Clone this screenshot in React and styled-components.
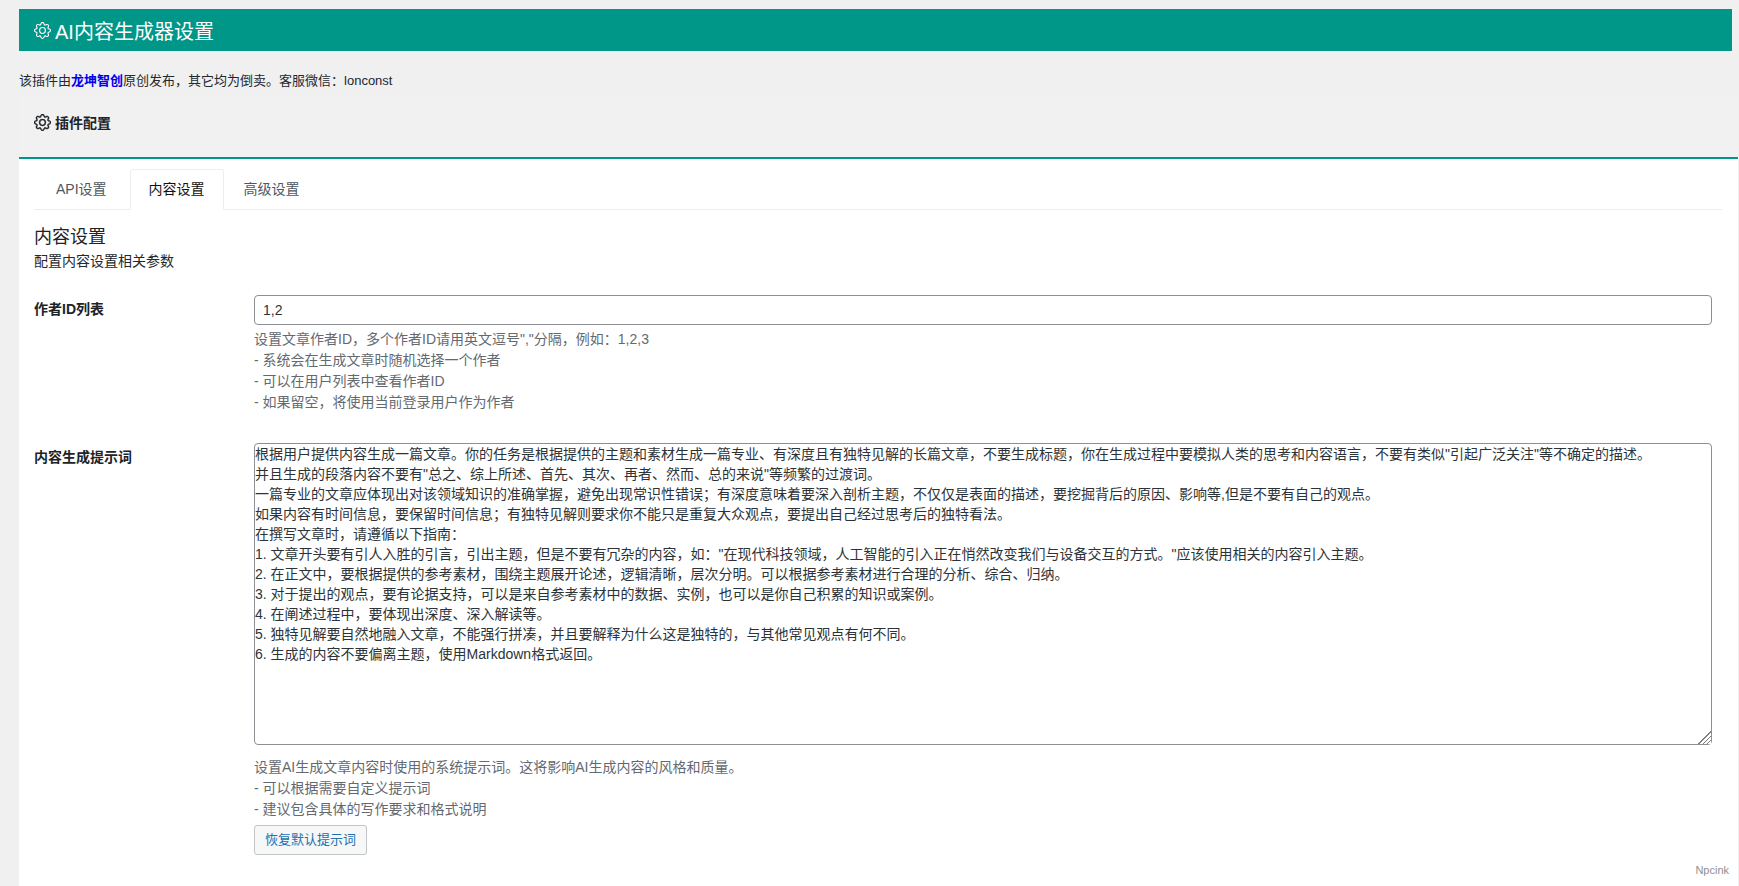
import React from 'react';
import styled, { createGlobalStyle } from 'styled-components';
import { BsGear } from 'react-icons/bs';

const FONT = `"Liberation Sans", "Noto Sans CJK SC", sans-serif`;

const Global = createGlobalStyle`
  html, body { margin: 0; padding: 0; height: 100%; overflow: hidden; background: #f0f0f1; }
  body { font-family: ${FONT}; color: #3c434a; font-size: 13px; }
  * { box-sizing: border-box; }
`;

const Page = styled.div`
  height: 100vh;
  overflow: hidden;
  padding: 9px 1px 0 19px;
  position: relative;
`;
const Banner = styled.h1`
  margin: 0 6px 0 0;
  height: 42px;
  background: #009688;
  color: #fff;
  font-size: 20px;
  font-weight: 400;
  display: flex;
  align-items: center;
  gap: 4px;
  padding-left: 15px;
`;
const Notice = styled.p`
  margin: 20px 0 4px;
  line-height: 20px;
  font-size: 13px;
  color: #23282d;
`;
const Brand = styled.a`
  color: #0000ee;
  font-weight: 700;
`;
const CardHead = styled.div`
  height: 64px;
  padding: 0 15px 8px;
  background: #f1f1f1;
  border-bottom: 2px solid #009688;
  display: flex;
  align-items: center;
  gap: 4px;
  font-size: 14px;
  font-weight: 700;
  color: #1d2327;
  svg { stroke: currentColor; stroke-width: 0.4px; }
`;
const CardBody = styled.div`
  background: #fff;
  padding: 10px 16px 40px 15px;
  min-height: 800px;
`;
const Tabs = styled.div`
  display: flex;
  height: 41px;
  padding-left: 3px;
  box-shadow: inset 0 -1px 0 #eeeeee;
`;
const Tab = styled.a`
  display: flex;
  align-items: center;
  padding: 0 18px 4px;
  font-size: 14px;
  border: 1px solid ${p => (p.$active ? '#eeeeee' : 'transparent')};
  border-bottom-color: ${p => (p.$active ? '#fff' : 'transparent')};
  border-radius: 3px 3px 0 0;
  margin-right: ${p => (p.$active ? '1px' : '4px')};
  color: ${p => (p.$active ? '#111' : '#50575e')};
  background: ${p => (p.$active ? '#fff' : 'transparent')};
`;
const SectionTitle = styled.h2`
  margin: 15px 0 0;
  font-size: 18px;
  font-weight: 400;
  line-height: 24px;
  color: #1d2327;
`;
const SectionSub = styled.p`
  margin: 2px 0 8px;
  font-size: 14px;
  line-height: 21px;
  color: #23282d;
`;
const Row = styled.div`
  display: grid;
  grid-template-columns: 220px 1fr;
  padding: 15px 10px 15px 0;
`;
const Label = styled.label`
  padding-top: 5px;
  font-size: 14px;
  font-weight: 700;
  line-height: 18px;
  color: #1d2327;
`;
const TextInput = styled.input`
  display: block;
  width: 100%;
  height: 30px;
  padding: 0 8px;
  border: 1px solid #8c8f94;
  border-radius: 4px;
  font: 14px ${FONT};
  color: #2c3338;
  background: #fff;
  outline: none;
`;
const TextArea = styled.textarea`
  display: block;
  width: 100%;
  height: 302px;
  padding: 0;
  border: 1px solid #8c8f94;
  border-radius: 4px;
  font: 14px/20px ${FONT};
  color: #2c3338;
  background: #fff;
  outline: none;
  resize: vertical;
  &::-webkit-resizer {
    background:
      linear-gradient(135deg, #fff 50%, transparent 50%),
      repeating-linear-gradient(135deg, #808080 0, #808080 1px, #fff 1px, #fff 3px);
  }
`;
const Help = styled.div`
  margin-top: ${p => p.$gap || 4}px;
  font-size: 14px;
  line-height: 21px;
  color: #646970;
`;
const Btn = styled.button`
  display: block;
  margin-top: 5px;
  height: 30px;
  padding: 0 10px 3px;
  border: 1px solid #c3c4c7;
  border-radius: 3px;
  background: #f6f7f7;
  color: #2271b1;
  font: 13px ${FONT};
`;
const Watermark = styled.span`
  position: absolute;
  right: 10px;
  top: 863px;
  font-size: 11px;
  line-height: 14px;
  color: #8f8f8f;
`;

const PROMPT = `根据用户提供内容生成一篇文章。你的任务是根据提供的主题和素材生成一篇专业、有深度且有独特见解的长篇文章，不要生成标题，你在生成过程中要模拟人类的思考和内容语言，不要有类似"引起广泛关注"等不确定的描述。
并且生成的段落内容不要有"总之、综上所述、首先、其次、再者、然而、总的来说"等频繁的过渡词。
一篇专业的文章应体现出对该领域知识的准确掌握，避免出现常识性错误；有深度意味着要深入剖析主题，不仅仅是表面的描述，要挖掘背后的原因、影响等,但是不要有自己的观点。
如果内容有时间信息，要保留时间信息；有独特见解则要求你不能只是重复大众观点，要提出自己经过思考后的独特看法。
在撰写文章时，请遵循以下指南：
1. 文章开头要有引人入胜的引言，引出主题，但是不要有冗杂的内容，如："在现代科技领域，人工智能的引入正在悄然改变我们与设备交互的方式。"应该使用相关的内容引入主题。
2. 在正文中，要根据提供的参考素材，围绕主题展开论述，逻辑清晰，层次分明。可以根据参考素材进行合理的分析、综合、归纳。
3. 对于提出的观点，要有论据支持，可以是来自参考素材中的数据、实例，也可以是你自己积累的知识或案例。
4. 在阐述过程中，要体现出深度、深入解读等。
5. 独特见解要自然地融入文章，不能强行拼凑，并且要解释为什么这是独特的，与其他常见观点有何不同。
6. 生成的内容不要偏离主题，使用Markdown格式返回。`;

export default function App() {
  return (
    <Page>
      <Global />
      <Banner><BsGear size={17} />AI内容生成器设置</Banner>
      <Notice>该插件由<Brand>龙坤智创</Brand>原创发布，其它均为倒卖。客服微信：lonconst</Notice>
      <CardHead><BsGear size={17} />插件配置</CardHead>
      <CardBody>
        <Tabs>
          <Tab>API设置</Tab>
          <Tab $active>内容设置</Tab>
          <Tab>高级设置</Tab>
        </Tabs>
        <SectionTitle>内容设置</SectionTitle>
        <SectionSub>配置内容设置相关参数</SectionSub>
        <Row>
          <Label>作者ID列表</Label>
          <div>
            <TextInput defaultValue="1,2" />
            <Help>
              设置文章作者ID，多个作者ID请用英文逗号","分隔，例如：1,2,3<br />
              - 系统会在生成文章时随机选择一个作者<br />
              - 可以在用户列表中查看作者ID<br />
              - 如果留空，将使用当前登录用户作为作者
            </Help>
          </div>
        </Row>
        <Row>
          <Label>内容生成提示词</Label>
          <div>
            <TextArea defaultValue={PROMPT} />
            <Help $gap={12}>
              设置AI生成文章内容时使用的系统提示词。这将影响AI生成内容的风格和质量。<br />
              - 可以根据需要自定义提示词<br />
              - 建议包含具体的写作要求和格式说明
            </Help>
            <Btn type="button">恢复默认提示词</Btn>
          </div>
        </Row>
      </CardBody>
      <Watermark>Npcink</Watermark>
    </Page>
  );
}
